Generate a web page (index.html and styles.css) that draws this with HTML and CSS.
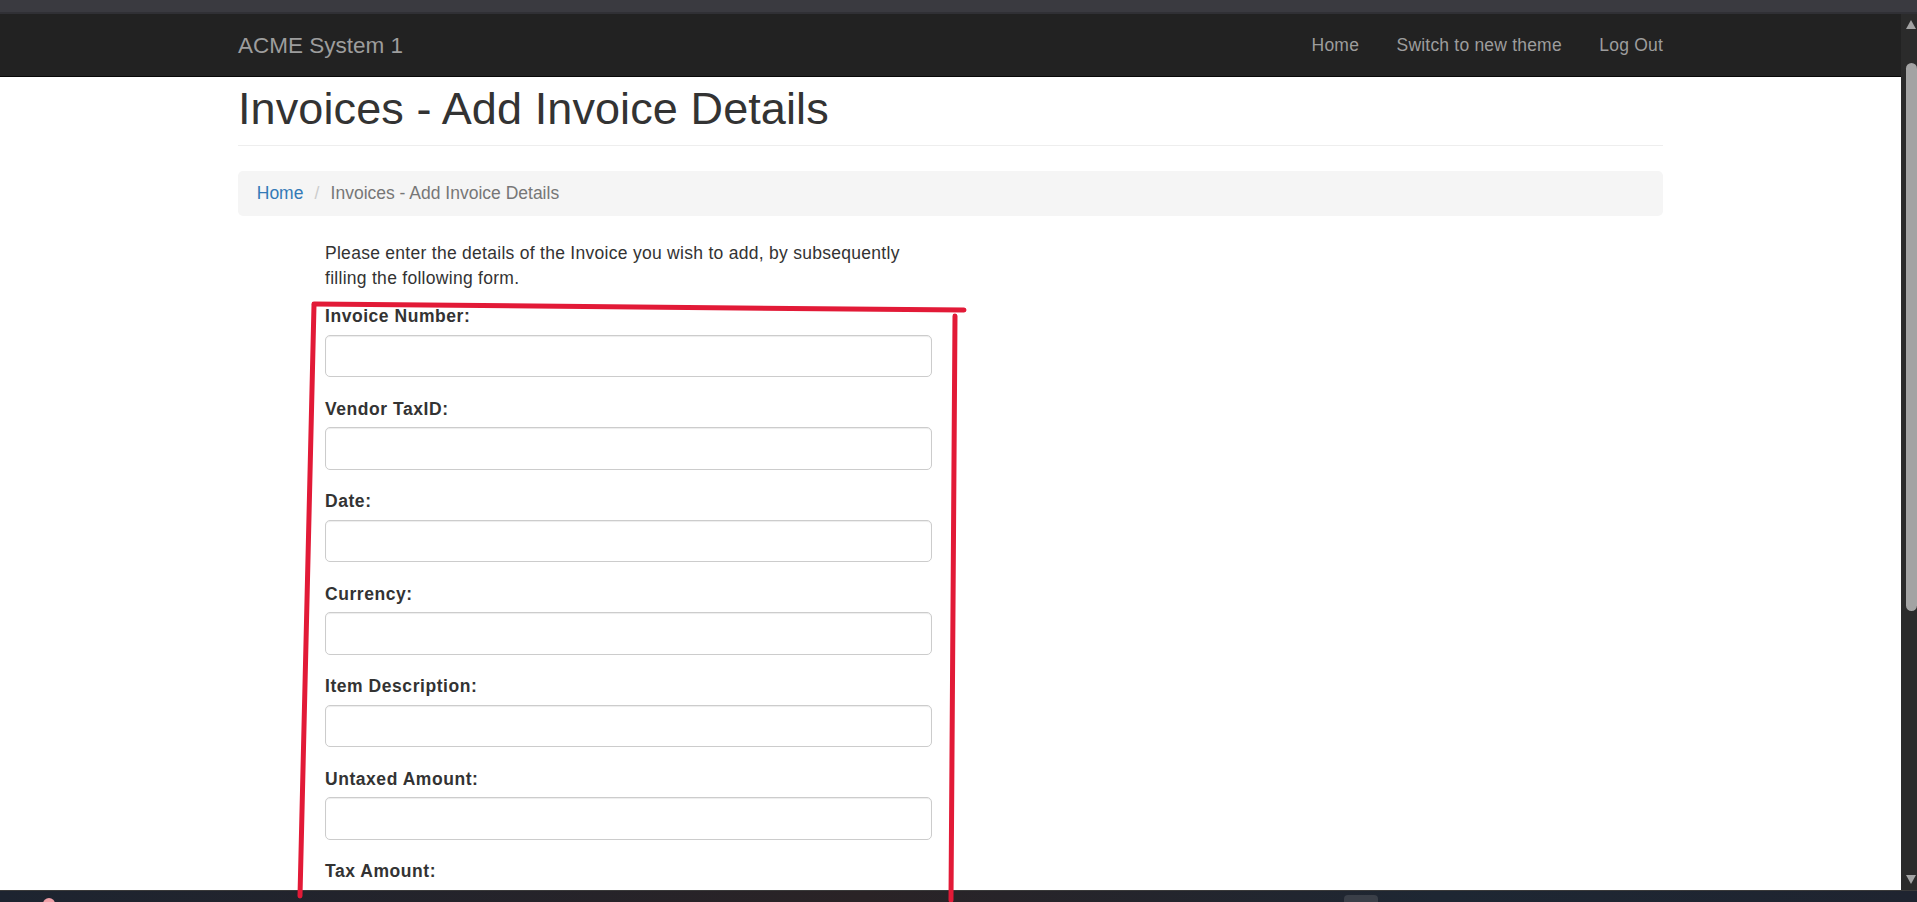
FILE: index.html
```html
<!DOCTYPE html>
<html lang="en">
<head>
<meta charset="utf-8">
<title>Invoices - Add Invoice Details</title>
<link rel="stylesheet" href="styles.css">
</head>
<body>
<div class="chrome-top"></div>
<div class="viewport">
  <div class="page">
    <nav class="navbar">
      <div class="nav-inner">
        <a class="brand" href="#">ACME System 1</a>
        <ul class="nav-links">
          <li><a href="#">Home</a></li>
          <li><a href="#">Switch to new theme</a></li>
          <li><a href="#">Log Out</a></li>
        </ul>
      </div>
    </nav>
    <main class="container">
      <div class="page-header">
        <h1>Invoices - Add Invoice Details</h1>
      </div>
      <ol class="breadcrumb">
        <li><a href="#">Home</a></li>
        <li class="active">Invoices - Add Invoice Details</li>
      </ol>
      <div class="form-col">
        <p class="intro">Please enter the details of the Invoice you wish to add, by subsequently filling the following form.</p>
        <form>
          <div class="form-group"><label>Invoice Number:</label><input class="form-control" type="text"></div>
          <div class="form-group"><label>Vendor TaxID:</label><input class="form-control" type="text"></div>
          <div class="form-group"><label>Date:</label><input class="form-control" type="text"></div>
          <div class="form-group"><label>Currency:</label><input class="form-control" type="text"></div>
          <div class="form-group"><label>Item Description:</label><input class="form-control" type="text"></div>
          <div class="form-group"><label>Untaxed Amount:</label><input class="form-control" type="text"></div>
          <div class="form-group"><label>Tax Amount:</label><input class="form-control" type="text"></div>
        </form>
      </div>
    </main>
  </div>
  <div class="scrollbar">
    <div class="sb-arrow up"></div>
    <div class="sb-track"><div class="sb-thumb"></div></div>
    <div class="sb-arrow down"></div>
  </div>
</div>
<div class="taskbar">
  <span class="tb-dot"></span>
  <span class="tb-item"></span>
</div>
<svg class="annotation" width="1917" height="902" viewBox="0 0 1917 902" aria-hidden="true">
  <g fill="none" stroke="#e21a37" stroke-width="5" stroke-linecap="round">
    <path d="M314 304 Q640 306 964 310"/>
    <path d="M314 305 Q308 600 300 896"/>
    <path d="M955 316 Q953 600 951 900"/>
  </g>
</svg>
</body>
</html>
```
FILE: styles.css
```css
* { box-sizing: border-box; }
html, body { margin: 0; padding: 0; }
body {
  width: 1917px;
  height: 902px;
  overflow: hidden;
  background: #1f2228;
  font-family: "Liberation Sans", Arial, Helvetica, sans-serif;
  font-size: 17.5px;
  line-height: 25px;
  color: #333;
  position: relative;
}
.chrome-top {
  height: 14px;
  background: #3a3a40;
  border-bottom: 2px solid #303035;
}
.viewport {
  display: flex;
  height: 876px;
}
.page {
  flex: 1;
  background: #fff;
  overflow: hidden;
}
.navbar {
  background: #222;
  border-bottom: 1px solid #080808;
  height: 63px;
}
.nav-inner {
  width: 1425px;
  margin: 0 auto;
  height: 62px;
  display: flex;
  justify-content: space-between;
  align-items: center;
}
.brand {
  color: #9d9d9d;
  font-size: 22.5px;
  line-height: 25px;
  text-decoration: none;
}
.nav-links {
  list-style: none;
  margin: 0 -18.75px 0 0;
  padding: 0;
  display: flex;
}
.nav-links a {
  display: block;
  padding: 18.75px;
  color: #9d9d9d;
  text-decoration: none;
  font-size: 17.5px;
  line-height: 25px;
  letter-spacing: 0.2px;
}
.container {
  width: 1425px;
  margin: 0 auto;
}
.page-header {
  margin: 7px 0 25px;
  padding-bottom: 11.25px;
  border-bottom: 1px solid #eee;
}
.page-header h1 {
  margin: 0;
  font-size: 45px;
  font-weight: 500;
  line-height: 49.5px;
  color: #333;
  letter-spacing: 0.1px;
}
.breadcrumb {
  list-style: none;
  margin: 0 0 25px;
  padding: 10px 18.75px;
  background: #f5f5f5;
  border-radius: 5px;
  display: flex;
  height: 45px;
}
.breadcrumb a { color: #337ab7; text-decoration: none; }
.breadcrumb li + li { margin-left: 4.9px; }
.breadcrumb li + li::before {
  content: "/\00a0";
  padding: 0 6.25px;
  color: #ccc;
}
.breadcrumb .active { color: #777; }
.form-col {
  margin-left: 87px;
  width: 607px;
}
.intro {
  margin: 0 0 12.5px;
  letter-spacing: 0.28px;
}
.form-group {
  margin-bottom: 18.75px;
}
.form-group label {
  display: block;
  font-weight: bold;
  margin-bottom: 6.25px;
  letter-spacing: 0.55px;
  padding-top: 1px;
  height: 25px;
}
.form-control {
  display: block;
  width: 100%;
  height: 42.5px;
  border: 1px solid #ccc;
  border-radius: 5px;
  background: #fff;
  box-shadow: inset 0 1px 1px rgba(0,0,0,.075);
  padding: 7.5px 15px;
  font: inherit;
}
.scrollbar {
  width: 16px;
  background: #2b2b2b;
  display: flex;
  flex-direction: column;
  align-items: center;
}
.sb-arrow {
  width: 0;
  height: 0;
  border-left: 5.5px solid transparent;
  border-right: 5.5px solid transparent;
  margin-left: 4px;
}
.sb-arrow.up {
  border-bottom: 9px solid #a3a3a3;
  margin-top: 6px;
}
.sb-arrow.down {
  border-top: 9px solid #a3a3a3;
  margin-bottom: 6px;
}
.sb-track {
  flex: 1;
  width: 100%;
  padding-top: 34px;
  display: flex;
  justify-content: flex-end;
}
.sb-thumb {
  width: 11px;
  height: 548px;
  background: #a3a3a3;
  border-radius: 6px;
}
.taskbar {
  height: 12px;
  background: linear-gradient(90deg, #1d2430 0%, #2a2326 45%, #1e2733 75%, #1f2430 100%);
  position: relative;
  border-top: 1px solid #3a3a3a;
}
.tb-dot {
  position: absolute;
  left: 43px;
  top: 7px;
  width: 12px;
  height: 12px;
  border-radius: 50%;
  background: #f0a0a8;
}
.tb-item {
  position: absolute;
  left: 1344px;
  top: 4px;
  width: 34px;
  height: 12px;
  border-radius: 4px;
  background: #3a3f48;
}
.annotation {
  position: absolute;
  left: 0;
  top: 0;
  pointer-events: none;
}
```
